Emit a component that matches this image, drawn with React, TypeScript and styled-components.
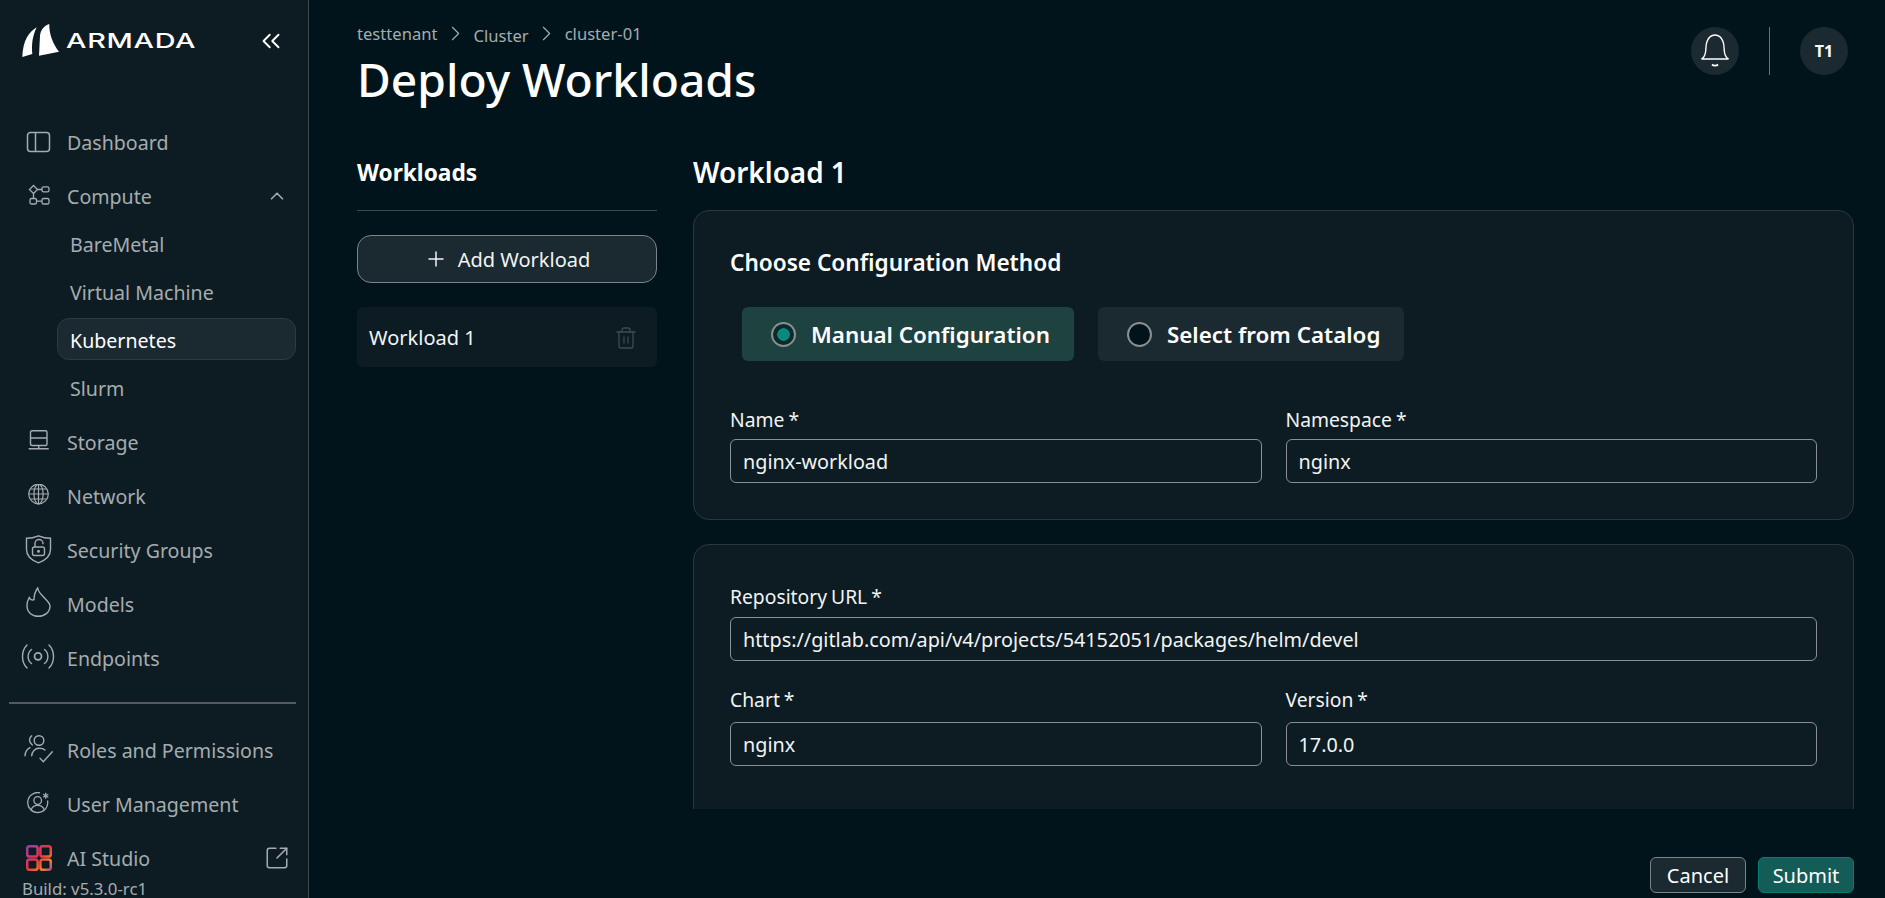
import * as React from 'react';
import styled, { createGlobalStyle } from 'styled-components';
import { ChevronsLeft, ChevronUp, ChevronRight, Plus, SquareArrowOutUpRight, Trash2 } from 'lucide-react';

const GlobalStyle = createGlobalStyle`
  html, body { margin: 0; padding: 0; height: 100%; overflow: hidden; background: #01141b; }
  * { box-sizing: border-box; }
  body { font-family: "Noto Sans", "Open Sans", sans-serif; color: #fff; }
`;

const DashboardIcon = () => (
  <svg width="26" height="26" viewBox="0 0 26 26" fill="none" stroke="currentColor" strokeWidth="1.5">
    <rect x="1.5" y="3.5" width="22" height="19" rx="3" />
    <path d="M9.5 3.5v19" />
  </svg>
);
const ComputeIcon = () => (
  <svg width="24" height="24" viewBox="0 0 24 24" fill="none" stroke="currentColor" strokeWidth="1.3">
    <path d="M6.5 1.5l4 4-4 4-4-4z" />
    <rect x="15" y="2.8" width="7" height="5" rx="1.6" />
    <rect x="3" y="14.5" width="6.5" height="5.5" rx="1.6" />
    <rect x="15" y="14.5" width="7" height="5.5" rx="1.6" />
    <path d="M10.5 5.5H15M6.5 9.5v5M9.5 17.2H15" />
  </svg>
);
const StorageIcon = () => (
  <svg width="24" height="24" viewBox="0 0 24 24" fill="none" stroke="currentColor" strokeWidth="1.4">
    <rect x="3.500" y="0.800" width="16.500" height="14.700" rx="1.500" />
    <path d="M3.500 8h16.500M11.700 15.500v3M1.700 18.700h20" />
  </svg>
);
const GlobeIcon = () => (
  <svg width="24" height="24" viewBox="0 0 24 24" fill="none" stroke="currentColor" strokeWidth="1.2">
    <g transform="translate(0 -2)">
      <circle cx="11.500" cy="12" r="9.800" />
      <ellipse cx="11.500" cy="12" rx="4.600" ry="9.800" />
      <path d="M11.500 2.200v19.600M1.700 12h19.600M3.100 7h16.800M3.100 17h16.800" />
    </g>
  </svg>
);
const ShieldIcon = () => (
  <svg width="28" height="30" viewBox="0 0 28 30" fill="none" stroke="currentColor" strokeWidth="1.400">
    <path d="M13.500 .8c4 1.700 8 2.500 12 2.500v11.200c0 6-4.300 10.500-12 13.300C5.800 25 1.500 20.500 1.500 14.500V3.300c4 0 8-.8 12-2.500z" />
    <rect x="7.500" y="12" width="12" height="8.500" rx="2" />
    <path d="M10 12V8.500a4 4 0 0 1 8 0v.700" />
    <circle cx="13.500" cy="16.200" r=".800" fill="currentColor" />
  </svg>
);
const FlameIcon = () => (
  <svg width="26" height="34" viewBox="0 0 26 34" fill="none" stroke="currentColor" strokeWidth="1.400">
    <path d="M11.700 1C12.500 6 16 8 19 11.500 22.500 15 24 17 24 19 24 25 19 29.300 12.300 29.300 6 29.300 1 25 1 19 1 16 1.800 13 3.200 10.500 4 12.500 6 13.500 8 12.700 8 8 9.500 4 11.700 1z" />
  </svg>
);
const SignalIcon = () => (
  <svg width="36" height="28" viewBox="0 0 36 28" fill="none" stroke="currentColor" strokeWidth="1.400" strokeLinecap="round">
    <circle cx="17" cy="12.300" r="3.500" strokeWidth="1.700" />
    <path d="M10.500 5.500C6 9 6 16 10.500 19.500M23.500 5.500C28 9 28 16 23.500 19.500" />
    <path d="M6 1C0 7 0 18 6 24M28 1C34 7 34 18 28 24" />
  </svg>
);
const RolesIcon = () => (
  <svg width="30" height="30" viewBox="0 0 30 30" fill="none" stroke="currentColor" strokeWidth="1.400" strokeLinecap="round">
    <circle cx="15" cy="5.500" r="4.800" />
    <path d="M7.700 .8C5 2.500 4.500 7.500 8.300 10" />
    <path d="M7.700 20.700C8 16.500 11 13.300 15 13.300c3 0 5 .7 6 1.700" />
    <path d="M1 20.700c.2-3.500 2-6.500 5-8" />
    <path d="M16 23.300l3.300 3.400 9-10" />
  </svg>
);
const UserCogIcon = () => (
  <svg width="24" height="24" viewBox="0 0 24 24" fill="none" stroke="currentColor" strokeWidth="1.300">
    <path d="M13 .8A10 10 0 1 0 20.500 8.500" />
    <circle cx="10.700" cy="8.500" r="3.800" />
    <path d="M4.200 17.700c1-3 3.500-4.300 6.500-4.300s5.500 1.300 6.500 4.300" />
    <path d="M18.700.7v6M16.100 2.200l5.200 3M21.300 2.200l-5.200 3" />
  </svg>
);
const StudioIcon = () => (
  <svg width="26" height="26" viewBox="0 0 26 26" fill="none" strokeWidth="2.500" stroke="url(#studio)">
    <defs>
      <linearGradient id="studio" gradientUnits="userSpaceOnUse" x1="0" y1="0" x2="26" y2="26">
        <stop offset="0" stopColor="#8e3fa8" />
        <stop offset="0.280" stopColor="#c93a78" />
        <stop offset="0.480" stopColor="#ee2f42" />
        <stop offset="0.780" stopColor="#f4822b" />
        <stop offset="1" stopColor="#9c3fa5" />
      </linearGradient>
    </defs>
    <rect x="1.200" y="1.200" width="10.400" height="10.400" rx="2.400" />
    <rect x="14.400" y="1.200" width="10.400" height="10.400" rx="2.400" />
    <rect x="1.200" y="14.400" width="10.400" height="10.400" rx="2.400" />
    <rect x="14.400" y="14.400" width="10.400" height="10.400" rx="2.400" />
  </svg>
);
const BellIcon = () => (
  <svg width="30" height="34" viewBox="0 0 30 34" fill="none" stroke="currentColor" strokeWidth="1.400">
    <path d="M1.500 25c3-1.500 4-4.500 4.300-9 .2-3.500.2-6 1.200-8.500C8.500 3.500 11.500 1 15 1s6.500 2.500 8 6.500c1 2.500 1 5 1.200 8.500.3 4.500 1.300 7.500 4.300 9z" />
    <path d="M12 30.500c1.500 1.500 4.500 1.500 6 0" strokeWidth="1.800" />
  </svg>
);
const SailIcon = () => (
  <svg width="38" height="34" viewBox="0 0 38 34" fill="#fff">
    <path d="M14.700 3.300C7 8 1 16 .3 33l10-3C9.500 20 10.500 12 14.700 3.300z" />
    <path d="M27.300 0C22 2 18.500 6 18 11.700l-1 20 20-4C31 20 27 10 27.300 0z" />
  </svg>
);

const Shell = styled.div`
  display: flex;
  height: 100vh;
  overflow: hidden;
`;

const Sidebar = styled.aside`
  flex: 0 0 309px;
  height: 100%;
  overflow: hidden;
  background: #0d1c23;
  border-right: 1px solid #3d474c;
`;

const Brand = styled.div`
  display: flex;
  align-items: center;
  justify-content: space-between;
  height: 115px;
  padding: 0 22px 33px 22px;
`;

const Logo = styled.div`
  display: flex;
  align-items: center;
  gap: 6px;
`;

const LogoWord = styled.span`
  display: inline-block;
  width: 129px;
  font-family: Inter, sans-serif;
  font-size: 20px;
  font-weight: 500;
  line-height: 1;
  letter-spacing: 0.5px;
  transform: scaleX(1.44);
  transform-origin: left center;
`;

const Collapse = styled.span`
  display: flex;
  color: #fff;
`;

const Nav = styled.nav`
  display: flex;
  flex-direction: column;
`;

const NavItem = styled.a`
  display: flex;
  align-items: center;
  height: 54px;
  padding: 0 18px 0 0;
  color: #a5acaf;
  font-size: 19.6px;
`;

const IconSlot = styled.span`
  flex: 0 0 67px;
  display: flex;
  justify-content: center;
  padding-left: 11px;
`;

const NavLabel = styled.span`
  flex: 1;
`;

const ChevronSlot = styled.span`
  display: flex;
  margin-right: 2px;
`;

const SubList = styled.div`
  display: flex;
  flex-direction: column;
  gap: 6px;
  margin: -1px 0 7px;
`;

const SubItem = styled.a<{ $active?: boolean }>`
  display: flex;
  align-items: center;
  height: 42px;
  margin: 0 12px 0 57px;
  padding: 3px 12px 0;
  border-radius: 12px;
  font-size: 19.6px;
  color: ${(p) => (p.$active ? '#fff' : '#a5acaf')};
  background: ${(p) => (p.$active ? '#1b2930' : 'transparent')};
  border: 1px solid ${(p) => (p.$active ? '#2f3a40' : 'transparent')};
`;

const SideRule = styled.hr`
  height: 2px;
  margin: 17px 12px 19px 9px;
  border: 0;
  background: #55595c;
`;

const BuildTag = styled.div`
  margin-top: -7px;
  padding-left: 22px;
  font-size: 16.800px;
  line-height: 22px;
  color: #a5acaf;
`;

const Main = styled.main`
  flex: 1;
  min-width: 0;
  display: flex;
  flex-direction: column;
  height: 100%;
  padding: 0 31px 0 48px;
`;

const TopBar = styled.header`
  display: flex;
  justify-content: space-between;
  height: 151px;
`;

const Crumbs = styled.div`
  display: flex;
  align-items: center;
  gap: 5.500px;
  padding-top: 21px;
  height: 45px;
  font-size: 16.600px;
  color: #a5acaf;
`;

const Crumb = styled.span<{ $low?: boolean }>`
  position: relative;
  top: ${(p) => (p.$low ? '2px' : '0')};
`;

const Title = styled.h1`
  margin: 7px 0 0;
  font-size: 46.200px;
  line-height: 56px;
  font-weight: 500;
  color: #fff;
`;

const TopActions = styled.div`
  display: flex;
  align-items: center;
  height: 48px;
  margin-top: 27px;
  padding-right: 6px;
`;

const RoundBadge = styled.span`
  display: flex;
  align-items: center;
  justify-content: center;
  width: 48px;
  height: 48px;
  border-radius: 50%;
  background: #1b2930;
  font-size: 16px;
  font-weight: 700;
`;

const TopDivider = styled.span`
  width: 1px;
  height: 48px;
  margin: 0 30px;
  background: #6a7174;
`;

const Columns = styled.div`
  flex: 1;
  min-height: 0;
  display: flex;
  gap: 36px;
`;

const ListColumn = styled.section`
  flex: 0 0 300px;
`;

const ListHeading = styled.h2`
  height: 60px;
  margin: 0 0 24px;
  padding-top: 8px;
  font-size: 22.700px;
  line-height: 28px;
  font-weight: 700;
  border-bottom: 1px solid #3d474c;
`;

const AddButton = styled.button`
  display: flex;
  align-items: center;
  justify-content: center;
  gap: 10px;
  width: 100%;
  height: 48px;
  border: 1px solid #7d8487;
  border-radius: 14px;
  background: #1b2930;
  color: #f2f4f4;
  font: inherit;
  font-size: 20px;
`;

const WorkloadRow = styled.div`
  display: flex;
  align-items: center;
  justify-content: space-between;
  height: 60px;
  margin-top: 24px;
  padding: 1px 19px 0 12px;
  border-radius: 6px;
  background: #0d1c23;
  font-size: 20px;
  color: #f2f4f4;
`;

const TrashSlot = styled.span`
  display: flex;
  color: #3f4a50;
`;

const FormColumn = styled.section`
  flex: 1;
  min-width: 0;
  display: flex;
  flex-direction: column;
  min-height: 0;
`;

const FormHeading = styled.h2`
  height: 59px;
  margin: 0;
  padding-top: 4px;
  font-size: 27.900px;
  line-height: 34px;
  font-weight: 600;
`;

const FormScroll = styled.div`
  height: 599px;
  overflow: hidden;
  display: flex;
  flex-direction: column;
  gap: 24px;
`;

const Card = styled.div<{ $pad: string }>`
  flex: none;
  padding: ${(p) => p.$pad};
  border: 1px solid #2c373d;
  border-radius: 16px;
  background: #0d1c23;
`;

const CardTitle = styled.h3`
  margin: 0 0 30px;
  font-size: 22.600px;
  line-height: 28px;
  font-weight: 600;
`;

const MethodRow = styled.div`
  display: flex;
  gap: 24px;
  margin: 0 0 47px 12px;
`;

const Method = styled.label<{ $on?: boolean }>`
  display: flex;
  align-items: center;
  gap: 15px;
  height: 54px;
  padding: 0 24px 0 29px;
  border-radius: 6px;
  font-size: 22.400px;
  font-weight: 600;
  background: ${(p) => (p.$on ? '#1e423f' : '#1b2930')};
`;

const RadioDot = styled.span<{ $on?: boolean }>`
  flex: none;
  width: 25px;
  height: 25px;
  border-radius: 50%;
  border: 2.500px solid #8a8f91;
  background: ${(p) => (p.$on ? 'radial-gradient(circle, #0a8a7c 0 6px, #0d2a2c 6.500px)' : '#01141b')};
`;

const FieldRow = styled.div`
  display: flex;
  gap: 24px;
`;

const Field = styled.div`
  flex: 1;
  min-width: 0;
`;

const FieldLabel = styled.div<{ $h?: number }>`
  height: ${(p) => p.$h ?? 31}px;
  font-size: 19.300px;
  line-height: 24px;
  word-spacing: -1px;
  color: #f2f4f4;
`;

const TextBox = styled.div`
  display: flex;
  align-items: center;
  height: 44px;
  padding: 0 12px;
  border: 1px solid #8a8f91;
  border-radius: 6px;
  font-size: 19.800px;
  color: #f2f4f4;
`;

const Stack = styled.div`
  display: flex;
  flex-direction: column;
  gap: 27px;
`;

const Footer = styled.footer`
  display: flex;
  justify-content: flex-end;
  gap: 12px;
  margin-top: 48px;
`;

const FootButton = styled.button<{ $primary?: boolean }>`
  width: 96px;
  height: 36px;
  padding: 2px 0 0;
  border-radius: 6px;
  font: inherit;
  font-size: 20px;
  line-height: 1;
  color: #fff;
  background: ${(p) => (p.$primary ? '#135c58' : '#1b2930')};
  border: 1px solid ${(p) => (p.$primary ? '#0a7d71' : '#7d8487')};
`;

type Item = { label: string; icon: React.ReactNode; trailing?: React.ReactNode };

const mainItems: Item[] = [
  { label: 'Storage', icon: <StorageIcon /> },
  { label: 'Network', icon: <GlobeIcon /> },
  { label: 'Security Groups', icon: <ShieldIcon /> },
  { label: 'Models', icon: <FlameIcon /> },
  { label: 'Endpoints', icon: <SignalIcon /> },
];

const adminItems: Item[] = [
  { label: 'Roles and Permissions', icon: <RolesIcon /> },
  { label: 'User Management', icon: <UserCogIcon /> },
  { label: 'AI Studio', icon: <StudioIcon />, trailing: <SquareArrowOutUpRight size={26} strokeWidth={1.4} /> },
];

const renderItem = (item: Item) => (
  <NavItem key={item.label}>
    <IconSlot>{item.icon}</IconSlot>
    <NavLabel>{item.label}</NavLabel>
    {item.trailing}
  </NavItem>
);

const App = () => (
  <Shell>
    <GlobalStyle />
    <Sidebar>
      <Brand>
        <Logo>
          <SailIcon />
          <LogoWord>ARMADA</LogoWord>
        </Logo>
        <Collapse>
          <ChevronsLeft size={30} strokeWidth={1.5} />
        </Collapse>
      </Brand>
      <Nav>
        <NavItem>
          <IconSlot>
            <DashboardIcon />
          </IconSlot>
          <NavLabel>Dashboard</NavLabel>
        </NavItem>
        <NavItem>
          <IconSlot>
            <ComputeIcon />
          </IconSlot>
          <NavLabel>Compute</NavLabel>
          <ChevronSlot>
            <ChevronUp size={22} strokeWidth={1.8} />
          </ChevronSlot>
        </NavItem>
        <SubList>
          <SubItem>BareMetal</SubItem>
          <SubItem>Virtual Machine</SubItem>
          <SubItem $active>Kubernetes</SubItem>
          <SubItem>Slurm</SubItem>
        </SubList>
        {mainItems.map(renderItem)}
        <SideRule />
        {adminItems.map(renderItem)}
        <BuildTag>Build: v5.3.0-rc1</BuildTag>
      </Nav>
    </Sidebar>
    <Main>
      <TopBar>
        <div>
          <Crumbs>
            <Crumb>testtenant</Crumb>
            <ChevronRight size={25} strokeWidth={1.1} />
            <Crumb $low>Cluster</Crumb>
            <ChevronRight size={25} strokeWidth={1.1} />
            <Crumb>cluster-01</Crumb>
          </Crumbs>
          <Title>Deploy Workloads</Title>
        </div>
        <TopActions>
          <RoundBadge>
            <BellIcon />
          </RoundBadge>
          <TopDivider />
          <RoundBadge>T1</RoundBadge>
        </TopActions>
      </TopBar>
      <Columns>
        <ListColumn>
          <ListHeading>Workloads</ListHeading>
          <AddButton>
            <Plus size={24} strokeWidth={1.5} />
            Add Workload
          </AddButton>
          <WorkloadRow>
            Workload 1
            <TrashSlot>
              <Trash2 size={24} strokeWidth={1.3} />
            </TrashSlot>
          </WorkloadRow>
        </ListColumn>
        <FormColumn>
          <FormHeading>Workload 1</FormHeading>
          <FormScroll>
            <Card $pad="38px 36px 36px">
              <CardTitle>Choose Configuration Method</CardTitle>
              <MethodRow>
                <Method $on>
                  <RadioDot $on />
                  Manual Configuration
                </Method>
                <Method>
                  <RadioDot />
                  Select from Catalog
                </Method>
              </MethodRow>
              <FieldRow>
                <Field>
                  <FieldLabel>Name *</FieldLabel>
                  <TextBox>nginx-workload</TextBox>
                </Field>
                <Field>
                  <FieldLabel>Namespace *</FieldLabel>
                  <TextBox>nginx</TextBox>
                </Field>
              </FieldRow>
            </Card>
            <Card $pad="40px 36px 120px">
              <Stack>
                <Field>
                  <FieldLabel $h={32}>Repository URL *</FieldLabel>
                  <TextBox>https://gitlab.com/api/v4/projects/54152051/packages/helm/devel</TextBox>
                </Field>
                <FieldRow>
                  <Field>
                    <FieldLabel $h={34}>Chart *</FieldLabel>
                    <TextBox>nginx</TextBox>
                  </Field>
                  <Field>
                    <FieldLabel $h={34}>Version *</FieldLabel>
                    <TextBox>17.0.0</TextBox>
                  </Field>
                </FieldRow>
              </Stack>
            </Card>
          </FormScroll>
          <Footer>
            <FootButton>Cancel</FootButton>
            <FootButton $primary>Submit</FootButton>
          </Footer>
        </FormColumn>
      </Columns>
    </Main>
  </Shell>
);

export default App;
